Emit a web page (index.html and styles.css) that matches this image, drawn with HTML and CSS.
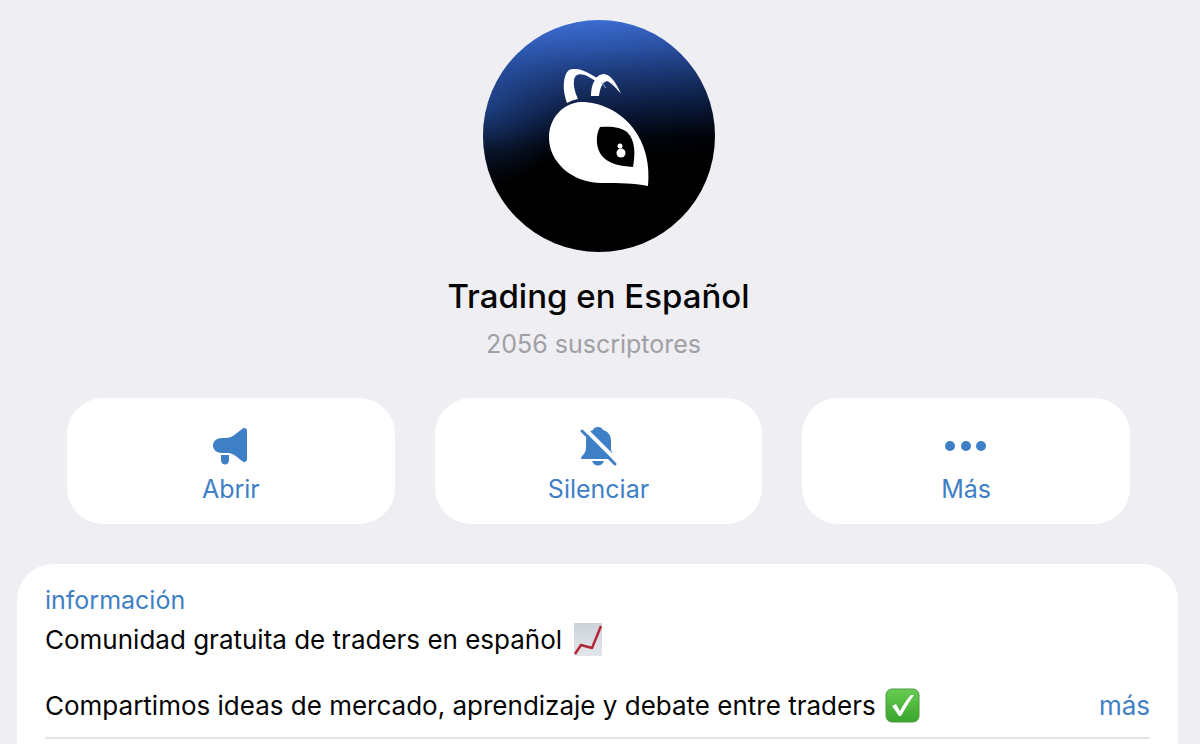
FILE: index.html
```html
<!DOCTYPE html>
<html lang="es">
<head>
  <meta charset="UTF-8">
  <meta name="viewport" content="width=device-width, initial-scale=1.0">
  <title>Trading en Español</title>
  <link rel="stylesheet" href="styles.css">
</head>
<body>
  <header class="profile">
    <svg class="avatar" viewBox="0 0 232 232" role="img" aria-label="Trading en Español">
      <defs>
        <linearGradient id="sky" x1="0.42" y1="0" x2="0.5" y2="1">
          <stop offset="0" stop-color="#3d6dd4"/>
          <stop offset="0.12" stop-color="#2c55aa"/>
          <stop offset="0.26" stop-color="#1a3570"/>
          <stop offset="0.4" stop-color="#0b1a3b"/>
          <stop offset="0.53" stop-color="#01040b"/>
          <stop offset="0.62" stop-color="#000"/>
        </linearGradient>
        <radialGradient id="glow" cx="0" cy="0.36" r="0.36">
          <stop offset="0" stop-color="#2f62c4" stop-opacity="0.45"/>
          <stop offset="0.5" stop-color="#2f62c4" stop-opacity="0.2"/>
          <stop offset="1" stop-color="#2f62c4" stop-opacity="0"/>
        </radialGradient>
      </defs>
      <circle cx="116" cy="116" r="116" fill="url(#sky)"/>
      <circle cx="116" cy="116" r="116" fill="url(#glow)"/>
      <!-- antennae -->
      <path fill="#fff" d="M84 83C82 77 80 69 81 62C82 53 85 49 90 49C100 48 108 55 115 58L114 62C110 59 106 57 102 55C95 53 92 55 91 60C90 67 93 74 95 79Q89 80 84 83Z"/>
      <path fill="#fff" d="M108 76C108 70 109 64 112 60C114 56 117 54 121 54C129 55 134 65 138 74C134 69 129 63 124 61C118 63 117 70 116 76Z"/>
      <path d="M118 62L123 68" stroke="#9fb0d0" stroke-width="1"/>
      <!-- head -->
      <path fill="#fff" d="M98 82C80 83 66 98 66 118C66 141 88 163 119 163C139 163 149 163 165 166C167 145 163 125 150 108C138 92 118 82 98 82Z"/>
      <path fill="#000" d="M117 107C128 106 138 107 144 112C153 121 152 135 150 147C137 146 126 144 119 136C113 129 112 116 117 107Z"/>
      <circle cx="138" cy="133" r="4.5" fill="#fff"/>
      <circle cx="137" cy="126" r="2.5" fill="#fff"/>
    </svg>
    <h1 class="title">Trading en Español</h1>
    <p class="subscribers">2056 suscriptores</p>
  </header>

  <nav class="actions">
    <button class="action" type="button">
      <svg class="icon" viewBox="0 0 40 40" aria-hidden="true">
        <path d="M11 11H15C21 11 26 6 31 2C33 0 36 1 36 4V32C36 35 33 36 31 34C26 30 22 26 17 26H11C6 26 2 23 2 18.500S6 11 11 11Z"/>
        <path d="M10 28H18V33C18 39 10 39 10 33Z"/>
      </svg>
      Abrir
    </button>
    <button class="action" type="button">
      <svg class="icon" viewBox="0 0 40 40" aria-hidden="true">
        <path d="M15 3C16 -1 24 -1 25 3C31 5 33 9 33 14V20C33 26 35 27 38 32H3C3 28 8 28 8 20V14C8 9 10 5 15 3Z"/>
        <path d="M14 34H26C24 40 16 40 14 34Z"/>
        <path class="slash-gap" d="M5 0L41 36"/>
        <path class="slash" d="M4 4L37 37"/>
      </svg>
      Silenciar
    </button>
    <button class="action" type="button">
      <svg class="icon" viewBox="0 0 40 40" aria-hidden="true">
        <circle cx="4" cy="19" r="5"/>
        <circle cx="20" cy="19" r="5"/>
        <circle cx="35" cy="19" r="5"/>
      </svg>
      Más
    </button>
  </nav>

  <main class="info">
    <h2 class="info-label">información</h2>
    <p class="info-line">
      Comunidad gratuita de traders en español
      <svg class="emoji" viewBox="0 0 36 36" role="img" aria-label="gráfico al alza">
        <defs>
          <linearGradient id="paper" x1="0" y1="0" x2="0" y2="1">
            <stop offset="0" stop-color="#cbd3da"/>
            <stop offset="1" stop-color="#e2e6eb"/>
          </linearGradient>
        </defs>
        <rect x="4" y="1" width="28" height="33" fill="url(#paper)"/>
        <path d="M5 32L11 23L22 26L31 4" fill="none" stroke="#b42735" stroke-width="2.500" stroke-linejoin="round"/>
      </svg>
    </p>
    <div class="info-row">
      <p class="info-line">
        Compartimos ideas de mercado, aprendizaje y debate entre traders
        <svg class="emoji" viewBox="0 0 36 36" role="img" aria-label="hecho">
          <defs>
            <linearGradient id="green" x1="0" y1="0" x2="0" y2="1">
              <stop offset="0" stop-color="#69cb52"/>
              <stop offset="1" stop-color="#37a52b"/>
            </linearGradient>
          </defs>
          <rect x="2" y="1" width="33" height="33" rx="6" fill="url(#green)" stroke="#4a9c3f"/>
          <path d="M8 18L12 16L16 23C19 17 23 11 27 7H30C25 14 21 21 17 28H15Z" fill="#fff"/>
        </svg>
      </p>
      <a class="more" href="#">más</a>
    </div>
  </main>
</body>
</html>
```
FILE: styles.css
```css
* {
  box-sizing: border-box;
}
body {
  margin: 0;
  min-height: 100vh;
  display: flex;
  flex-direction: column;
  overflow: hidden;
  background-color: #eeeef3;
  color: #050505;
  font-family: Inter, "Liberation Sans", sans-serif;
  font-size: 26px;
  line-height: 32px;
}
h1, h2, p {
  margin: 0;
}
.profile {
  display: flex;
  flex-direction: column;
  align-items: center;
  padding: 20px 20px 0 17px;
}
.avatar {
  width: 232px;
  height: 232px;
}
.title {
  margin-top: 24px;
  font-size: 33px;
  font-weight: 500;
  line-height: 40px;
}
.subscribers {
  margin-top: 12px;
  padding-right: 10px;
  color: #a0a0a4;
  font-size: 25px;
}
.actions {
  display: grid;
  grid-template-columns: repeat(3, 1fr);
  gap: 40px;
  padding: 38px 70px 40px 67px;
}
.action {
  display: flex;
  flex-direction: column;
  align-items: center;
  gap: 6px;
  padding: 29px 20px 19px;
  border: none;
  border-radius: 36px;
  background-color: #ffffff;
  color: #3f7fc6;
  font: inherit;
  font-size: 25px;
  cursor: pointer;
}
.icon {
  width: 40px;
  height: 40px;
  fill: #3f7fc6;
  overflow: visible;
}
.slash, .slash-gap {
  fill: none;
  stroke-linecap: round;
}
.slash {
  stroke: #3f7fc6;
  stroke-width: 3;
}
.slash-gap {
  stroke: #ffffff;
  stroke-width: 4;
}
.info {
  flex: 1;
  margin: 0 22px 0 17px;
  padding: 20px 28px 0;
  border-radius: 36px 36px 0 0;
  background-color: #ffffff;
}
.info-label {
  color: #3f7fc6;
  font-size: 25px;
  font-weight: 400;
}
.info-line {
  display: flex;
  align-items: center;
  gap: 8px;
  margin-top: 6px;
  line-height: 36px;
}
.emoji {
  flex: none;
  width: 36px;
  height: 36px;
}
.info-row {
  display: flex;
  justify-content: space-between;
  align-items: flex-end;
  margin-top: 24px;
  padding-bottom: 13px;
  border-bottom: 2px solid #e4e4e6;
}
.more {
  color: #3f7fc6;
  line-height: 36px;
  text-decoration: none;
}
```
